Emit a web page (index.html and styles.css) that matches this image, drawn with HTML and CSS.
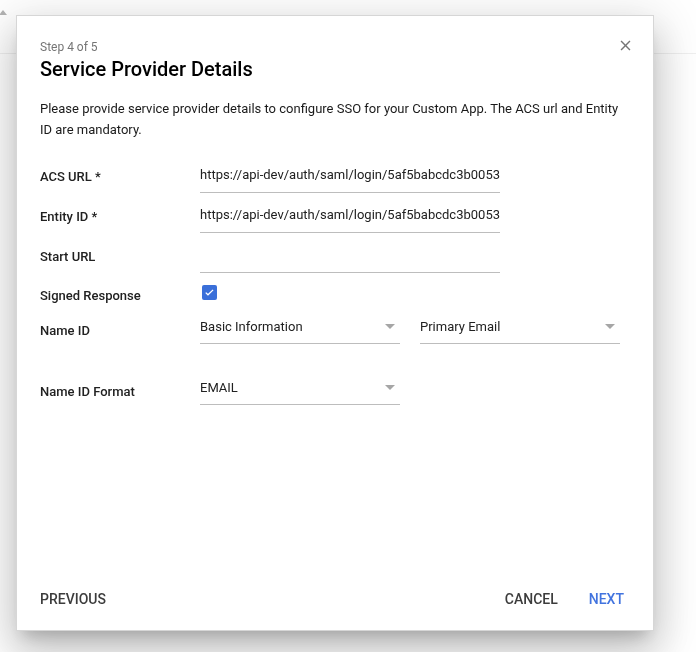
FILE: index.html
```html
<!DOCTYPE html>
<html>
<head>
    <title>Service Provider Details</title>
    <link rel="stylesheet" href="styles.css">
</head>
<body>
    <div class="topbar">
        <span class="sort-arrow"></span>
    </div>

    <div class="dialog">
        <div class="head">
            <div>
                <div class="step">Step 4 of 5</div>
                <h2 class="title">Service Provider Details</h2>
            </div>
            <button class="close" type="button" aria-label="Close">
                <svg viewBox="0 0 24 24" width="17" height="17"><path d="M19 6.41L17.59 5 12 10.59 6.41 5 5 6.41 10.59 12 5 17.59 6.41 19 12 13.41 17.59 19 19 17.59 13.41 12z" fill="#757575"/></svg>
            </button>
        </div>

        <p class="intro">Please provide service provider details to configure SSO for your Custom App. The ACS url and Entity ID are mandatory.</p>

        <form class="form">
            <div class="row">
                <label class="label" for="acs">ACS URL *</label>
                <input class="input" id="acs" type="text" value="https://api-dev/auth/saml/login/5af5babcdc3b0053">
            </div>
            <div class="row">
                <label class="label" for="entity">Entity ID *</label>
                <input class="input" id="entity" type="text" value="https://api-dev/auth/saml/login/5af5babcdc3b0053">
            </div>
            <div class="row">
                <label class="label" for="start">Start URL</label>
                <input class="input" id="start" type="text" value="">
            </div>
            <div class="row row-check">
                <span class="label">Signed Response</span>
                <span class="checkbox">
                    <svg viewBox="0 0 16 16" width="11" height="11"><path d="M2.5 8.2l3.3 3.2 7.4-7.2" fill="none" stroke="#fff" stroke-width="1.9"/></svg>
                </span>
            </div>
            <div class="row row-select">
                <span class="label">Name ID</span>
                <div class="select"><span>Basic Information</span><i class="caret"></i></div>
                <div class="select select-second"><span>Primary Email</span><i class="caret"></i></div>
            </div>
            <div class="row row-select row-format">
                <span class="label">Name ID Format</span>
                <div class="select"><span>EMAIL</span><i class="caret"></i></div>
            </div>
        </form>

        <div class="footer">
            <button class="btn btn-prev" type="button">Previous</button>
            <div class="spacer"></div>
            <button class="btn" type="button">Cancel</button>
            <button class="btn btn-next" type="button">Next</button>
        </div>
    </div>
</body>
</html>
```

FILE: styles.css
```css
body { margin: 0; background: #fff; font-family: Roboto, "Noto Sans", Arial, sans-serif; color: #212121; }

.topbar { height: 43px; border-bottom: 1px solid #efefef; }
.sort-arrow { display: block; width: 0; height: 0; margin: 10px 0 0 -1px; border-left: 4px solid transparent; border-right: 4px solid transparent; border-bottom: 5px solid #b3b3b3; }

.dialog {
    position: fixed; left: 16px; top: 15px; width: 638px; height: 616px; box-sizing: border-box;
    padding: 23px 23px 13px 23px; background: #fff; border: 1px solid #d6d6d6;
    display: flex; flex-direction: column;
    box-shadow: 0 11px 15px -7px rgba(0,0,0,.2), 0 24px 38px 3px rgba(0,0,0,.14), 0 9px 46px 8px rgba(0,0,0,.12);
}

.head { display: flex; justify-content: space-between; align-items: flex-start; }
.step { font-size: 12px; line-height: 16px; color: #757575; }
.title { margin: 2px 0 0; font-size: 20px; line-height: 24px; font-weight: 500; color: #000; }
.close { width: 17px; height: 17px; padding: 0; margin: -2px -4px 0 0; border: none; background: none; cursor: pointer; }
.close svg { display: block; }

.intro { margin: 17px 0 0; font-size: 13px; line-height: 21px; color: #1a1a1a; }

.form { margin-top: 20px; }
.row { display: flex; align-items: center; margin-bottom: 7px; }
.label { width: 160px; flex: none; font-size: 13px; font-weight: 500; color: #212121; }
.input { width: 300px; height: 33px; box-sizing: border-box; padding: 0 0 3px; border: none; border-bottom: 1px solid #bdbdbd; font: 13px Roboto, Arial, sans-serif; color: #212121; outline: none; }

.row-check { height: 31px; margin-bottom: 0; align-items: flex-start; }
.row-check .label { padding-top: 8px; }
.checkbox { display: flex; align-items: center; justify-content: center; width: 15px; height: 15px; margin: 5px 0 0 2px; border-radius: 2px; background: #3a6fd9; }

.row-select .label { padding-top: 5px; }
.row-format { margin-top: 28px; }
.select { width: 200px; height: 33px; box-sizing: border-box; padding: 0 5px 1px 0; border-bottom: 1px solid #bdbdbd; display: flex; align-items: center; justify-content: space-between; font-size: 13px; color: #212121; }
.select-second { margin-left: 20px; }
.caret { width: 0; height: 0; border-left: 5px solid transparent; border-right: 5px solid transparent; border-top: 5px solid #a6a6a6; }

.footer { margin-top: auto; display: flex; align-items: center; gap: 15px; }
.spacer { flex: 1; }
.btn { height: 36px; padding: 0 8px; border: none; background: none; font: 500 14px Roboto, Arial, sans-serif; text-transform: uppercase; color: #3c3c3c; cursor: pointer; }
.btn-prev { margin-left: -8px; }
.btn-next { margin-right: -2px; color: #4274df; }
```
